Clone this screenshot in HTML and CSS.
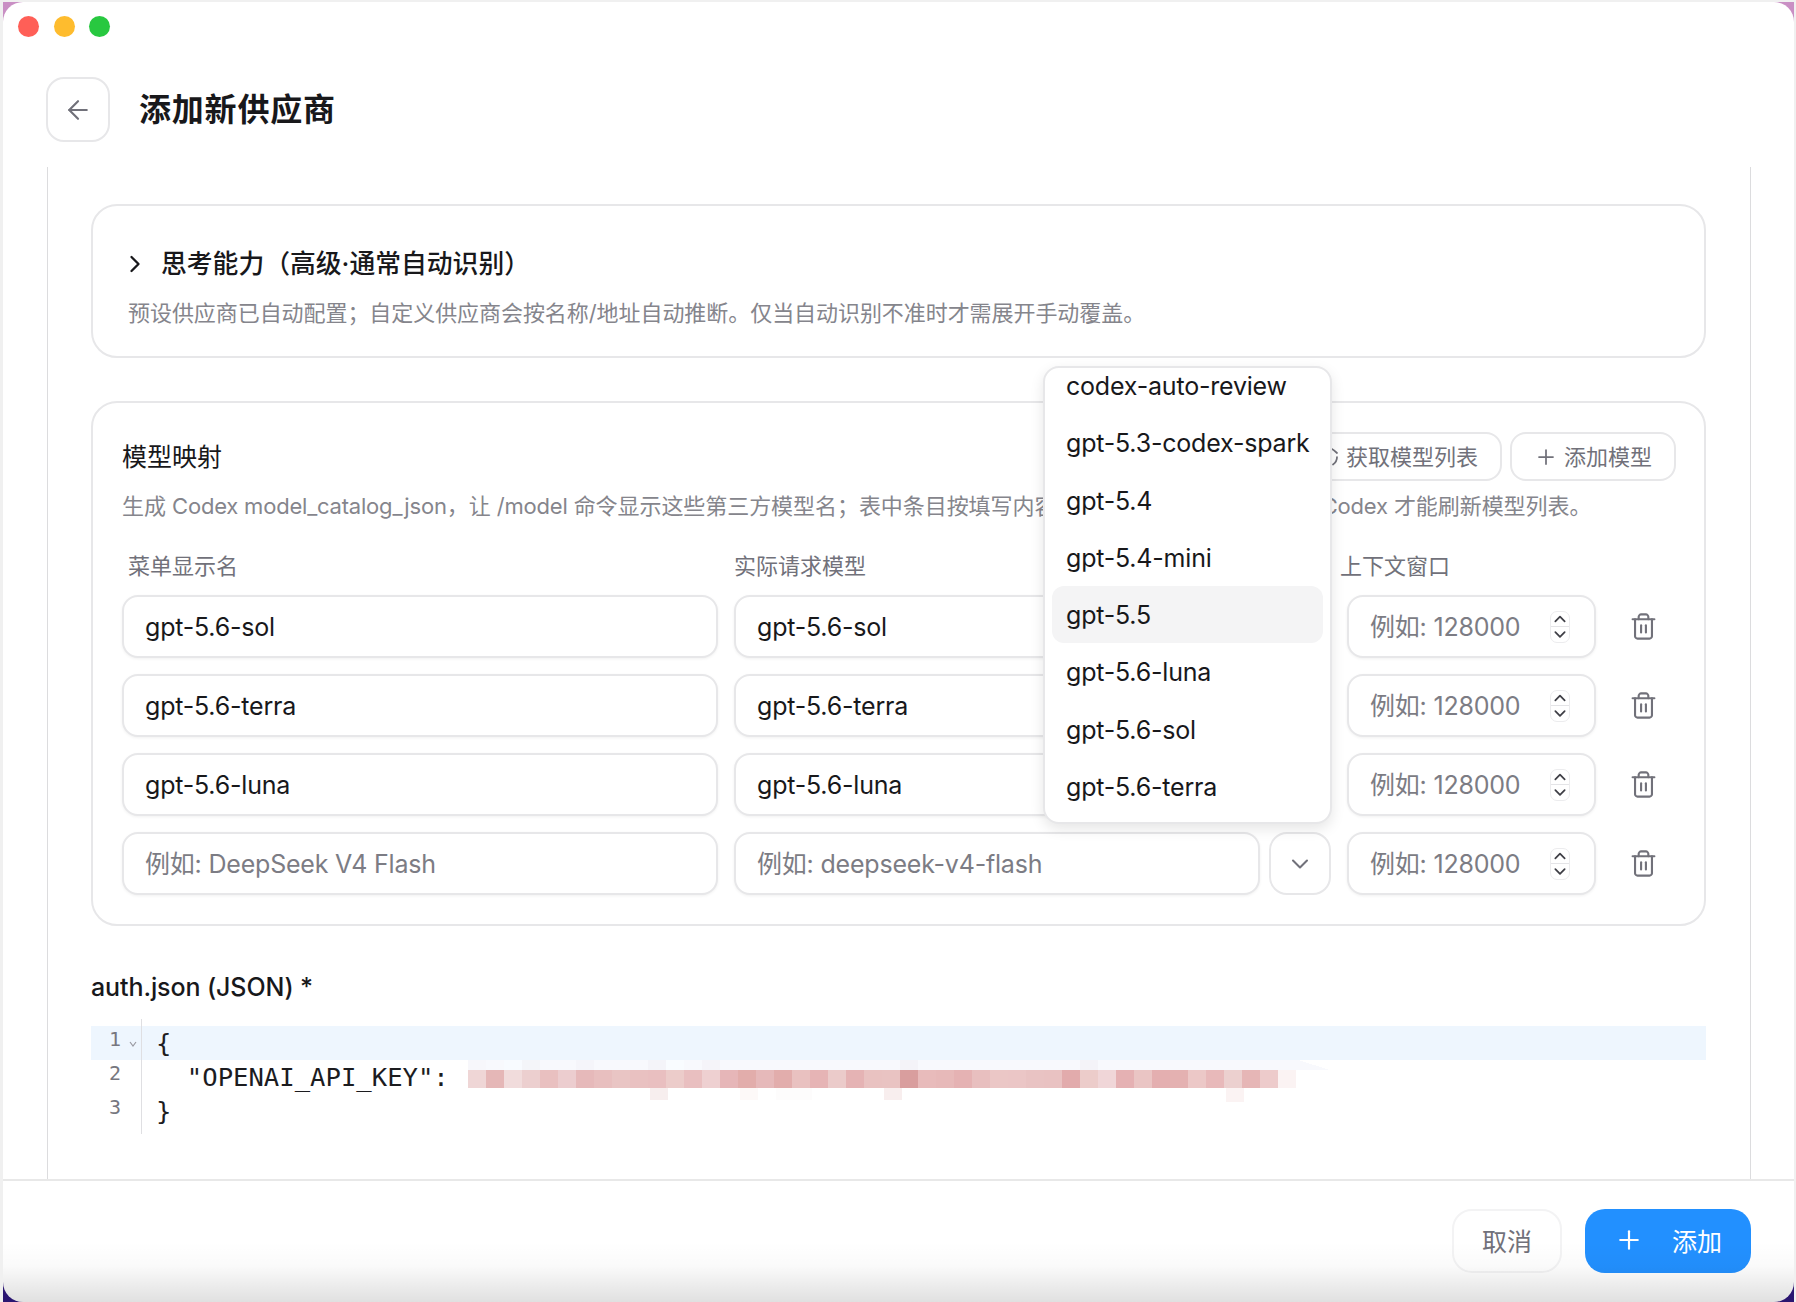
FILE: index.html
```html
<!DOCTYPE html>
<html lang="zh-CN">
<head>
    <meta charset="UTF-8">
    <title>添加新供应商</title>
    <link rel="stylesheet" href="styles.css">
</head>
<body>
<div class="wall">
<div class="window">
    <div class="titlebar">
        <span class="light red"></span>
        <span class="light yellow"></span>
        <span class="light green"></span>
    </div>

    <header class="page-head">
        <button class="back-btn">
            <svg class="icon" width="30" height="30" viewBox="0 0 24 24"><path d="m12 19-7-7 7-7"/><path d="M19 12H5"/></svg>
        </button>
        <h1>添加新供应商</h1>
    </header>

    <main class="content">
        <section class="card thinking">
            <div class="thinking-title">
                <svg class="icon dark" width="28" height="28" viewBox="0 0 24 24"><path d="m9 18 6-6-6-6"/></svg>
                <h3>思考能力（高级·通常自动识别）</h3>
            </div>
            <p class="hint">预设供应商已自动配置；自定义供应商会按名称/地址自动推断。仅当自动识别不准时才需展开手动覆盖。</p>
        </section>

        <section class="card mapping">
            <div class="mapping-head">
                <h3 class="mapping-title">模型映射</h3>
                <div class="head-actions">
                    <button class="ghost-btn">
                        <svg class="icon" width="24" height="24" viewBox="0 0 24 24"><path d="M21 12a9 9 0 0 1-4 7.5"/><path d="M3 12a9 9 0 0 1 15-6.7L21 8"/></svg>
                        获取模型列表
                    </button>
                    <button class="ghost-btn">
                        <svg class="icon" width="24" height="24" viewBox="0 0 24 24"><path d="M5 12h14"/><path d="M12 5v14"/></svg>
                        添加模型
                    </button>
                </div>
            </div>
            <p class="hint mapping-hint">生成 <span class="latin">Codex model_catalog_json</span>，让 <span class="latin">/model</span> 命令显示这些第三方模型名；表中条目按填写内容<span class="tight">写入配置，保存后需要重启</span> <span class="latin">Codex</span> 才能刷新模型列表。</p>

            <div class="col-labels">
                <span>菜单显示名</span>
                <span>实际请求模型</span>
                <span>上下文窗口</span>
            </div>

            <div class="rows">
                <div class="row">
                    <input class="field" value="gpt-5.6-sol">
                    <div class="model-cell">
                        <input class="field" value="gpt-5.6-sol">
                        <button class="pick-btn"><svg class="icon" width="28" height="28" viewBox="0 0 24 24"><path d="m6 9 6 6 6-6"/></svg></button>
                    </div>
                    <div class="ctx-field">
                        <input placeholder="例如: 128000">
                        <span class="spin"><svg width="14" height="14" viewBox="0 0 14 14"><path d="m2.5 9 4.5-4.5 4.5 4.5"/></svg><svg width="14" height="14" viewBox="0 0 14 14"><path d="m2.5 5 4.5 4.5 4.5-4.5"/></svg></span>
                    </div>
                    <button class="trash-btn"><svg class="icon" width="29" height="29" viewBox="0 0 24 24"><path d="M3 6h18"/><path d="M19 6v14c0 1-1 2-2 2H7c-1 0-2-1-2-2V6"/><path d="M8 6V4c0-1 1-2 2-2h4c1 0 2 1 2 2v2"/><path d="M10 11v6"/><path d="M14 11v6"/></svg></button>
                </div>
                <div class="row">
                    <input class="field" value="gpt-5.6-terra">
                    <div class="model-cell">
                        <input class="field" value="gpt-5.6-terra">
                        <button class="pick-btn"><svg class="icon" width="28" height="28" viewBox="0 0 24 24"><path d="m6 9 6 6 6-6"/></svg></button>
                    </div>
                    <div class="ctx-field">
                        <input placeholder="例如: 128000">
                        <span class="spin"><svg width="14" height="14" viewBox="0 0 14 14"><path d="m2.5 9 4.5-4.5 4.5 4.5"/></svg><svg width="14" height="14" viewBox="0 0 14 14"><path d="m2.5 5 4.5 4.5 4.5-4.5"/></svg></span>
                    </div>
                    <button class="trash-btn"><svg class="icon" width="29" height="29" viewBox="0 0 24 24"><path d="M3 6h18"/><path d="M19 6v14c0 1-1 2-2 2H7c-1 0-2-1-2-2V6"/><path d="M8 6V4c0-1 1-2 2-2h4c1 0 2 1 2 2v2"/><path d="M10 11v6"/><path d="M14 11v6"/></svg></button>
                </div>
                <div class="row">
                    <input class="field" value="gpt-5.6-luna">
                    <div class="model-cell">
                        <input class="field" value="gpt-5.6-luna">
                        <button class="pick-btn"><svg class="icon" width="28" height="28" viewBox="0 0 24 24"><path d="m6 9 6 6 6-6"/></svg></button>
                    </div>
                    <div class="ctx-field">
                        <input placeholder="例如: 128000">
                        <span class="spin"><svg width="14" height="14" viewBox="0 0 14 14"><path d="m2.5 9 4.5-4.5 4.5 4.5"/></svg><svg width="14" height="14" viewBox="0 0 14 14"><path d="m2.5 5 4.5 4.5 4.5-4.5"/></svg></span>
                    </div>
                    <button class="trash-btn"><svg class="icon" width="29" height="29" viewBox="0 0 24 24"><path d="M3 6h18"/><path d="M19 6v14c0 1-1 2-2 2H7c-1 0-2-1-2-2V6"/><path d="M8 6V4c0-1 1-2 2-2h4c1 0 2 1 2 2v2"/><path d="M10 11v6"/><path d="M14 11v6"/></svg></button>
                </div>
                <div class="row">
                    <input class="field" placeholder="例如: DeepSeek V4 Flash">
                    <div class="model-cell">
                        <input class="field" placeholder="例如: deepseek-v4-flash">
                        <button class="pick-btn"><svg class="icon" width="28" height="28" viewBox="0 0 24 24"><path d="m6 9 6 6 6-6"/></svg></button>
                    </div>
                    <div class="ctx-field">
                        <input placeholder="例如: 128000">
                        <span class="spin"><svg width="14" height="14" viewBox="0 0 14 14"><path d="m2.5 9 4.5-4.5 4.5 4.5"/></svg><svg width="14" height="14" viewBox="0 0 14 14"><path d="m2.5 5 4.5 4.5 4.5-4.5"/></svg></span>
                    </div>
                    <button class="trash-btn"><svg class="icon" width="29" height="29" viewBox="0 0 24 24"><path d="M3 6h18"/><path d="M19 6v14c0 1-1 2-2 2H7c-1 0-2-1-2-2V6"/><path d="M8 6V4c0-1 1-2 2-2h4c1 0 2 1 2 2v2"/><path d="M10 11v6"/><path d="M14 11v6"/></svg></button>
                </div>
            </div>

            <div class="model-menu">
                <ul>
                    <li>codex-auto-review</li>
                    <li>gpt-5.3-codex-spark</li>
                    <li>gpt-5.4</li>
                    <li>gpt-5.4-mini</li>
                    <li class="active">gpt-5.5</li>
                    <li>gpt-5.6-luna</li>
                    <li>gpt-5.6-sol</li>
                    <li>gpt-5.6-terra</li>
                </ul>
            </div>
        </section>

        <label class="editor-label">auth.json (JSON) *</label>
        <div class="editor">
            <div class="line current">
                <span class="ln">1<svg class="fold" width="12" height="12" viewBox="0 0 12 12"><path d="m3 4 3 4 3-4"/></svg></span>
                <code>{</code>
            </div>
            <div class="line">
                <span class="ln">2</span>
                <code>  "OPENAI_API_KEY":</code>
            </div>
            <div class="line">
                <span class="ln">3</span>
                <code>}</code>
            </div>

            <!-- pixelated api key -->
            <svg class="redacted" width="862" height="42" viewBox="0 0 862 42" shape-rendering="crispEdges">
                <path d="M0 10 8 0h822l32 10z" fill="#f8f9fd"/>
                <rect x="0" y="0" width="18" height="10" fill="#f7f7fb"/><rect x="36" y="0" width="18" height="10" fill="#f8fbff"/><rect x="54" y="0" width="18" height="10" fill="#f4f5f9"/><rect x="108" y="0" width="18" height="10" fill="#f5f5fa"/><rect x="180" y="0" width="18" height="10" fill="#f4f4f9"/><rect x="198" y="0" width="18" height="10" fill="#f9fcff"/><rect x="234" y="0" width="18" height="10" fill="#f5f4f9"/><rect x="432" y="0" width="18" height="10" fill="#f4f3f8"/><rect x="612" y="0" width="18" height="10" fill="#f4f3f8"/>
                <rect x="0" y="10" width="18" height="18" fill="#efd6d6"/><rect x="18" y="10" width="18" height="18" fill="#e5b7b7"/><rect x="36" y="10" width="18" height="18" fill="#f1dcdc"/><rect x="54" y="10" width="18" height="18" fill="#eccfcf"/><rect x="72" y="10" width="18" height="18" fill="#e9c0c0"/><rect x="90" y="10" width="18" height="18" fill="#eccdcf"/>
                <rect x="108" y="10" width="18" height="18" fill="#e6b9ba"/><rect x="126" y="10" width="18" height="18" fill="#e8bfbf"/><rect x="144" y="10" width="18" height="18" fill="#e9c5c4"/><rect x="162" y="10" width="18" height="18" fill="#e9c1c1"/><rect x="180" y="10" width="18" height="18" fill="#e9bfc0"/><rect x="198" y="10" width="18" height="18" fill="#ecccca"/>
                <rect x="216" y="10" width="18" height="18" fill="#e9bfc0"/><rect x="234" y="10" width="18" height="18" fill="#eed0d1"/><rect x="252" y="10" width="18" height="18" fill="#e6b6b8"/><rect x="270" y="10" width="18" height="18" fill="#e2adab"/><rect x="288" y="10" width="18" height="18" fill="#e6b9ba"/><rect x="306" y="10" width="18" height="18" fill="#e2adac"/>
                <rect x="324" y="10" width="18" height="18" fill="#e9c1c0"/><rect x="342" y="10" width="18" height="18" fill="#e6b4b5"/><rect x="360" y="10" width="18" height="18" fill="#ebcbca"/><rect x="378" y="10" width="18" height="18" fill="#e5b3b4"/><rect x="396" y="10" width="18" height="18" fill="#e9c2c1"/><rect x="414" y="10" width="18" height="18" fill="#e9c3c2"/>
                <rect x="432" y="10" width="18" height="18" fill="#d99e9e"/><rect x="450" y="10" width="18" height="18" fill="#e8bbbb"/><rect x="468" y="10" width="18" height="18" fill="#e7b9b9"/><rect x="486" y="10" width="18" height="18" fill="#e5b2b3"/><rect x="504" y="10" width="18" height="18" fill="#e8bfbf"/><rect x="522" y="10" width="18" height="18" fill="#ebc7c6"/>
                <rect x="540" y="10" width="18" height="18" fill="#ebc6c6"/><rect x="558" y="10" width="18" height="18" fill="#e9c3c3"/><rect x="576" y="10" width="18" height="18" fill="#e9c2c2"/><rect x="594" y="10" width="18" height="18" fill="#e2abac"/><rect x="612" y="10" width="18" height="18" fill="#ecccca"/><rect x="630" y="10" width="18" height="18" fill="#f0d6d8"/>
                <rect x="648" y="10" width="18" height="18" fill="#e5b1b3"/><rect x="666" y="10" width="18" height="18" fill="#eac5c4"/><rect x="684" y="10" width="18" height="18" fill="#e4afb0"/><rect x="702" y="10" width="18" height="18" fill="#e4b1b1"/><rect x="720" y="10" width="18" height="18" fill="#ecc8c7"/><rect x="738" y="10" width="18" height="18" fill="#e8b9ba"/>
                <rect x="756" y="10" width="18" height="18" fill="#ecd0cf"/><rect x="774" y="10" width="18" height="18" fill="#e6b6b6"/><rect x="792" y="10" width="18" height="18" fill="#edcbcb"/><rect x="810" y="10" width="18" height="18" fill="#fbf3f3"/>
                <rect x="182" y="28" width="18" height="12" fill="#f7eeee"/><rect x="272" y="28" width="18" height="12" fill="#fdf9f8"/><rect x="308" y="28" width="36" height="12" fill="#fdfcfc"/><rect x="416" y="28" width="18" height="12" fill="#f8eeee"/><rect x="758" y="28" width="18" height="14" fill="#fbf3f3"/>
            </svg>
        </div>
    </main>

    <footer class="page-foot">
        <button class="cancel-btn">取消</button>
        <button class="add-btn">
            <svg class="icon" width="30" height="30" viewBox="0 0 24 24"><path d="M5 12h14"/><path d="M12 5v14"/></svg>
            添加
        </button>
    </footer>
</div>
</div>
</body>
</html>
```

FILE: styles.css
```css
:root {
    --text-color: #18181b;
    --muted-color: #71717a;
    --hint-color: #85858c;
    --border-color: #e7e7e9;
    --primary-color: #2290ff;
}

* {
    margin: 0;
    padding: 0;
    box-sizing: border-box;
    font-family: Inter, 'Noto Sans CJK SC', sans-serif;
}

html, body {
    height: 100%;
    overflow: hidden;
}

body {
    background-color: #f0f0f0;
    padding: 2px 2px 0 3px;
    color: var(--text-color);
}

.wall {
    height: 100%;
    background: linear-gradient(#c98fc4 0%, #c98fc4 40%, #3a1d86 90%, #2a1570 100%);
}

.window {
    position: relative;
    height: 100%;
    display: flex;
    flex-direction: column;
    background-color: white;
    border-radius: 20px;
    overflow: hidden;
}

button {
    background: white;
    cursor: pointer;
}

.icon {
    fill: none;
    stroke: var(--muted-color);
    stroke-width: 1.75;
    stroke-linecap: round;
    stroke-linejoin: round;
    flex-shrink: 0;
}

.icon.dark {
    stroke: var(--text-color);
    stroke-width: 2;
}

/* Title bar */
.titlebar {
    height: 50px;
    padding: 14px 0 0 15px;
    display: flex;
    gap: 14.5px;
}

.light {
    width: 21px;
    height: 21px;
    border-radius: 50%;
}

.red { background-color: #ff5f57; }
.yellow { background-color: #febc2e; }
.green { background-color: #28c840; }

.page-head {
    display: flex;
    align-items: center;
    gap: 29px;
    padding: 25px 43px;
}

.back-btn {
    width: 64px;
    height: 65px;
    border: 2px solid var(--border-color);
    border-radius: 18px;
    display: flex;
    align-items: center;
    justify-content: center;
}

h1 {
    font-size: 32px;
    font-weight: 600;
    letter-spacing: 0.8px;
    margin-bottom: 6px;
}

h3 {
    font-size: 25.8px;
    font-weight: 500;
    line-height: 34px;
}

.mapping-title {
    font-size: 25px;
    font-weight: 400;
}

/* Scroll area */
.content {
    flex: 1;
    margin: 0 43px 0 44px;
    padding: 37px 44px 0 43px;
    border-left: 1px solid #dcdcde;
    border-right: 1px solid #dcdcde;
    min-height: 0;
}

.card {
    border: 2px solid var(--border-color);
    border-radius: 26px;
}

.hint {
    font-size: 22px;
    letter-spacing: -0.06px;
    line-height: 32px;
    color: var(--hint-color);
    white-space: nowrap;
}

.latin {
    letter-spacing: -0.2px;
}

.tight {
    letter-spacing: -0.4px;
}

.thinking {
    height: 154px;
    padding: 41px 35px 0;
}

.thinking-title {
    display: flex;
    align-items: center;
    gap: 12px;
    margin-left: -7px;
    margin-bottom: 16px;
}

.mapping {
    position: relative;
    margin-top: 43px;
    height: 525px;
    padding: 29px 28px 0 29px;
}

.mapping-head {
    display: flex;
    justify-content: space-between;
    align-items: center;
    height: 49px;
}

.head-actions {
    display: flex;
    gap: 8px;
}

.ghost-btn {
    height: 49px;
    padding: 0 22px 3px 22px;
    display: flex;
    align-items: center;
    gap: 6px;
    border: 2px solid var(--border-color);
    border-radius: 16px;
    font-size: 22px;
    color: var(--muted-color);
}

.ghost-btn .icon {
    margin-top: 3px;
}

.mapping-hint {
    margin-top: 9px;
    overflow: hidden;
}

.col-labels {
    display: grid;
    grid-template-columns: 606px 606px 1fr;
    padding-left: 6px;
    margin-top: 29px;
    margin-bottom: 14px;
    font-size: 22px;
    line-height: 30px;
    color: var(--muted-color);
}

.rows {
    display: flex;
    flex-direction: column;
    gap: 16px;
}

.row {
    display: grid;
    grid-template-columns: 596px 597px 249px 1fr;
    gap: 16px;
    height: 63px;
}

.field,
.ctx-field {
    height: 63px;
    border: 2px solid var(--border-color);
    border-radius: 16px;
    background-color: white;
    box-shadow: 0 1px 3px rgba(0, 0, 0, 0.06);
}

input {
    font-size: 25px;
    letter-spacing: -0.2px;
    color: var(--text-color);
    outline: none;
    min-width: 0;
}

input::placeholder {
    color: #7c7c84;
    opacity: 1;
}

.field {
    padding: 0 21px;
    width: 100%;
}

.model-cell {
    display: flex;
    gap: 9px;
}

.pick-btn {
    flex: 0 0 62px;
    height: 63px;
    border: 2px solid var(--border-color);
    border-radius: 18px;
    display: flex;
    align-items: center;
    justify-content: center;
}

.ctx-field {
    display: flex;
    align-items: center;
    padding: 0 24px 0 21px;
}

.ctx-field input {
    flex: 1;
    width: 100%;
    border: none;
    background: none;
}

.spin {
    flex: 0 0 20px;
    height: 32px;
    display: flex;
    flex-direction: column;
    align-items: center;
    border: 1px solid #ececee;
    border-radius: 7px;
    overflow: hidden;
}

.spin svg {
    flex: 1;
    width: 100%;
    fill: none;
    stroke: #3f3f46;
    stroke-width: 1.7;
    stroke-linecap: round;
    stroke-linejoin: round;
}

.spin svg:first-child {
    border-bottom: 1px solid #e4e4e7;
}

.trash-btn {
    border: none;
    padding-right: 2px;
    display: flex;
    align-items: center;
    justify-content: center;
}

/* Model dropdown */
.model-menu {
    position: absolute;
    left: 950px;
    top: -37px;
    width: 289px;
    height: 458px;
    padding: 0 7px;
    background-color: white;
    border: 2px solid var(--border-color);
    border-radius: 16px;
    box-shadow: 0 5px 14px rgba(0, 0, 0, 0.1);
    overflow: hidden;
}

.model-menu ul {
    list-style-type: none;
    margin-top: -11px;
}

.model-menu li {
    height: 57.25px;
    line-height: 59px;
    padding-left: 14px;
    font-size: 25px;
    letter-spacing: -0.2px;
    border-radius: 12px;
    white-space: nowrap;
}

.model-menu li.active {
    background-color: #f4f4f5;
}

/* auth.json editor */
.editor-label {
    display: block;
    margin-top: 45px;
    font-size: 25px;
    letter-spacing: -0.1px;
    font-weight: 500;
    line-height: 32px;
}

.editor {
    position: relative;
    margin-top: 16px;
    height: 115px;
    padding-top: 7px;
}

.editor::before {
    content: "";
    position: absolute;
    left: 50px;
    top: 0;
    bottom: 0;
    width: 1px;
    background-color: #dfdfe2;
}

.line {
    display: flex;
    height: 34px;
}

.line.current {
    background-color: #eef6fe;
}

.ln {
    position: relative;
    flex: 0 0 65px;
    padding-left: 18px;
    font-family: 'DejaVu Sans Mono', monospace;
    font-size: 20px;
    line-height: 26px;
    color: #77777f;
}

.fold {
    position: absolute;
    left: 36px;
    top: 12px;
    fill: none;
    stroke: #9a9aa2;
    stroke-width: 1.2;
}

.line code {
    font-family: 'DejaVu Sans Mono', monospace;
    font-size: 25.6px;
    line-height: 34px;
    white-space: pre;
    color: #1c1c1f;
}

.redacted {
    position: absolute;
    left: 377px;
    top: 41px;
}

/* Footer */
.page-foot {
    height: 123px;
    border-top: 2px solid #e8e8e8;
    display: flex;
    justify-content: flex-end;
    gap: 23px;
    padding: 28px 43px 0 0;
}

.page-foot button {
    height: 64px;
    padding-bottom: 3px;
    border-radius: 20px;
    font-size: 25px;
    display: flex;
    align-items: center;
    justify-content: center;
}

.cancel-btn {
    width: 110px;
    border: 2px solid #f3f3f4;
    color: var(--muted-color);
}

.add-btn {
    width: 166px;
    gap: 28px;
    border: none;
    color: white;
    background-color: var(--primary-color);
}

.add-btn .icon {
    stroke: white;
}

/* window shadow fading in at the bottom edge */
.window::after {
    content: "";
    position: absolute;
    left: 0;
    right: 0;
    bottom: 0;
    height: 60px;
    background: linear-gradient(rgba(0, 0, 0, 0), rgba(0, 0, 0, 0.02) 40%, rgba(0, 0, 0, 0.12));
    pointer-events: none;
}
```
